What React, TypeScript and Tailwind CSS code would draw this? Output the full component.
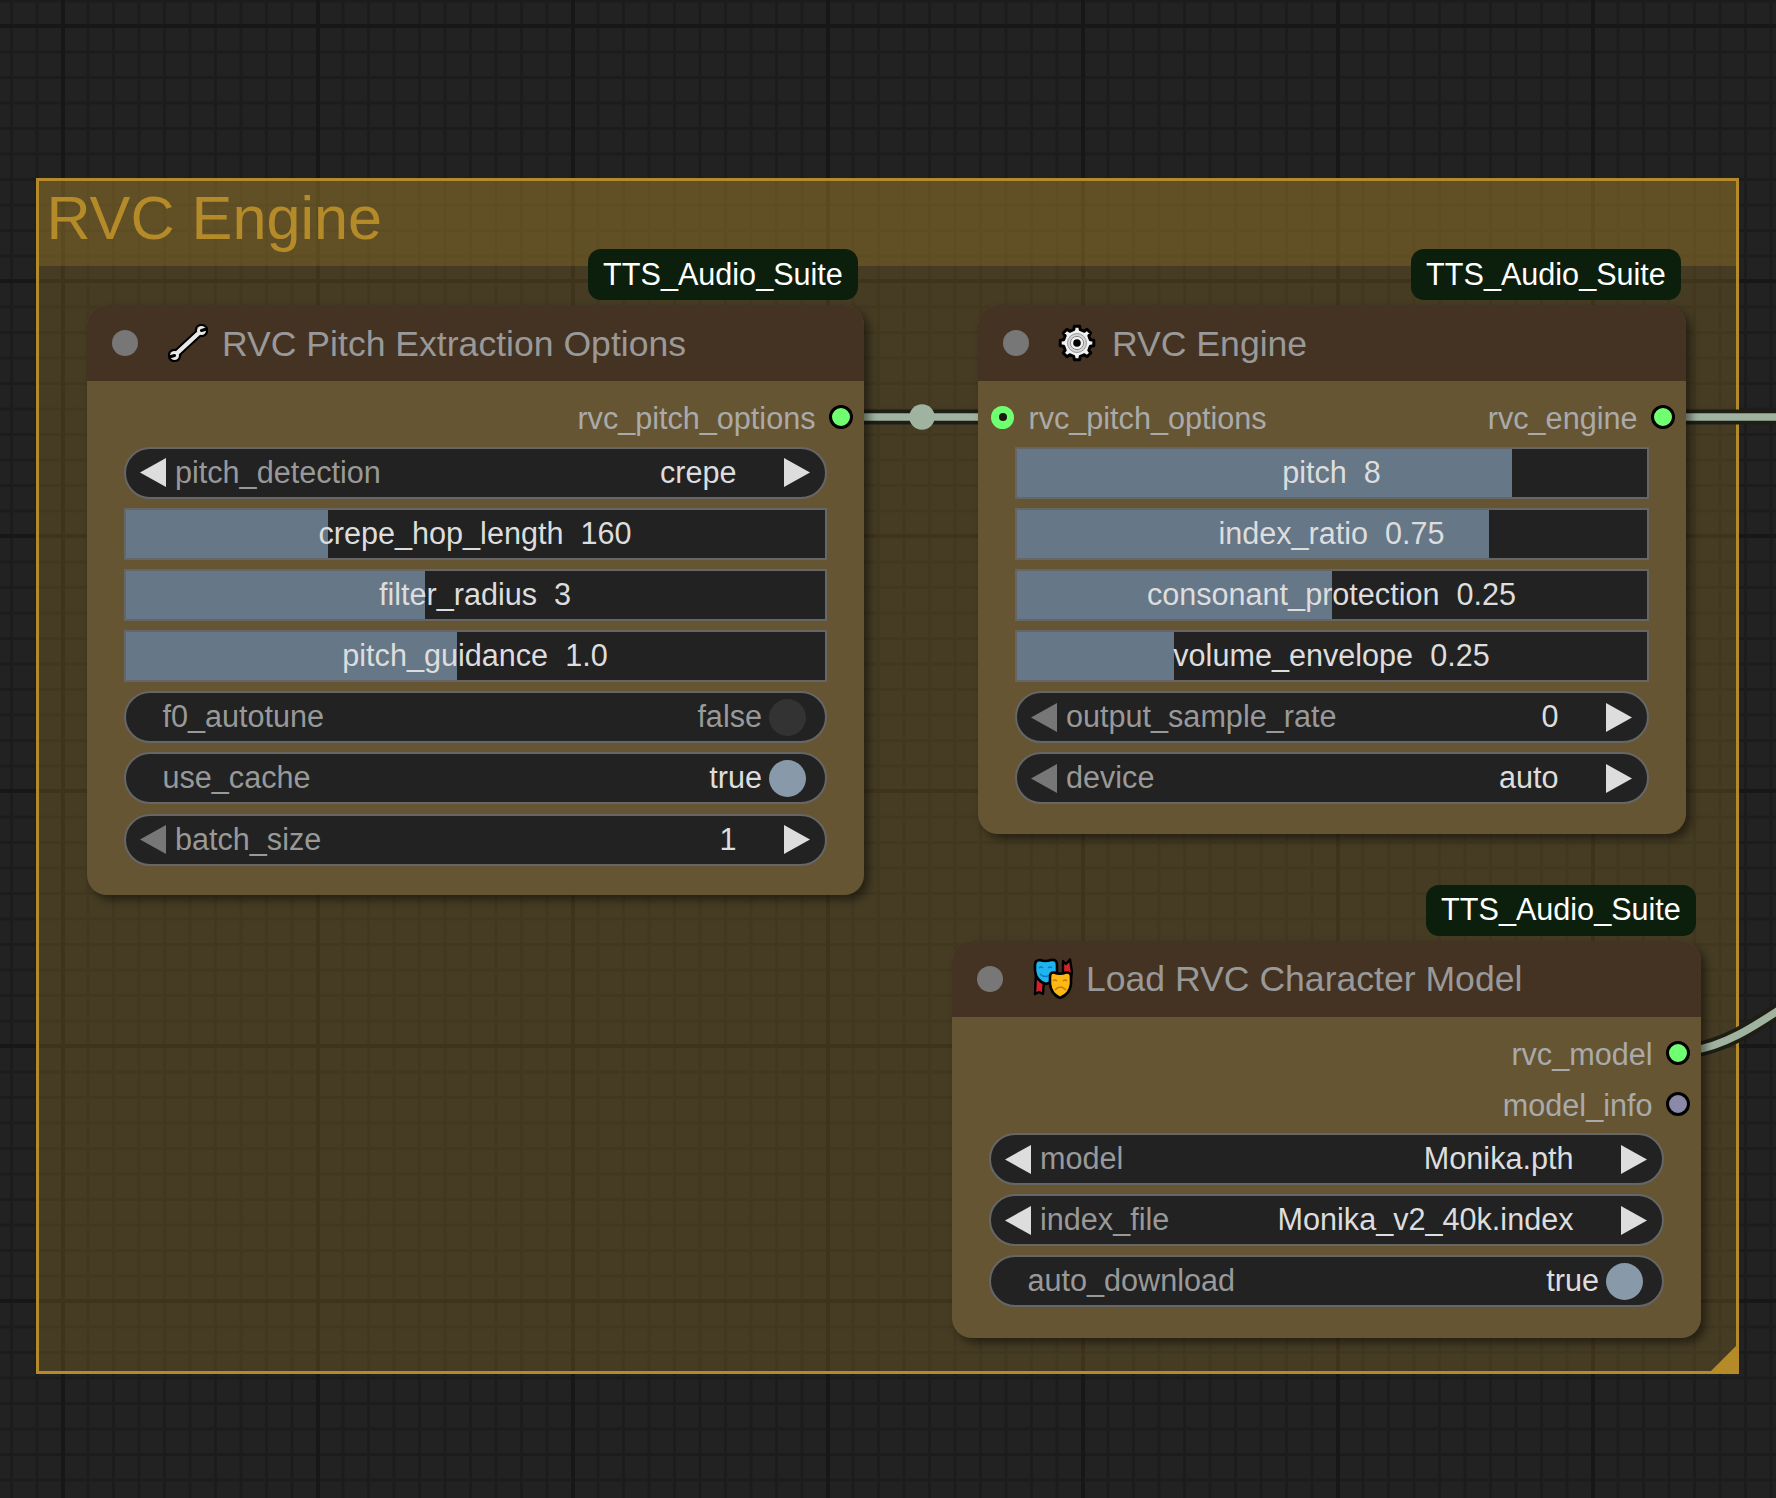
import React from 'react';

const FONT = 'font-["Liberation_Sans",Arial,sans-serif]';

const Arrow = ({ dir, dim }: { dir: 'left' | 'right'; dim?: boolean }) => (
  <svg width="26" height="29" viewBox="0 0 26 29" className="shrink-0">
    <polygon points={dir === 'left' ? '26,0 26,29 0,14.5' : '0,0 0,29 26,14.5'} fill={dim ? '#777777' : '#dddddd'} />
  </svg>
);

const Combo = ({ label, value, dimLeft }: { label: string; value: string; dimLeft?: boolean }) => (
  <div className="flex h-[52px] items-center rounded-full border-[2.5px] border-[#666666] bg-[#222222] pl-[14px] pr-[14.5px] text-[30.6px]">
    <Arrow dir="left" dim={dimLeft} />
    <span className="ml-[9.5px] text-[#999999]">{label}</span>
    <span className="ml-auto mr-[47.5px] text-[#dddddd]">{value}</span>
    <Arrow dir="right" />
  </div>
);

const Slider = ({ label, value, pct }: { label: string; value: string; pct: number }) => (
  <div className="relative flex h-[52px] items-center justify-center border-[2.5px] border-[#666666] bg-[#222222] text-[30.6px] text-[#dddddd]">
    <div className="absolute inset-y-0 left-0 bg-[#667788]" style={{ width: `${pct}%` }} />
    <span className="relative whitespace-pre">{label}  {value}</span>
  </div>
);

const Toggle = ({ label, on }: { label: string; on: boolean }) => (
  <div className="flex h-[52px] items-center rounded-full border-[2.5px] border-[#666666] bg-[#222222] pl-[37px] pr-[18.5px] text-[30.6px]">
    <span className="text-[#999999]">{label}</span>
    <span className={on ? 'ml-auto mr-[7px] text-[#dddddd]' : 'ml-auto mr-[7px] text-[#999999]'}>{on ? 'true' : 'false'}</span>
    <div className={on ? 'h-[37px] w-[37px] rounded-full bg-[#8899aa]' : 'h-[37px] w-[37px] rounded-full bg-[#333333]'} />
  </div>
);

const OutDot = ({ color }: { color: string }) => (
  <div className={`h-[24px] w-[24px] shrink-0 rounded-full border-[3px] border-black ${color}`} />
);

const InDot = () => (
  <div className="flex h-[23px] w-[23px] shrink-0 items-center justify-center rounded-full bg-[#70ff70]">
    <div className="h-[8px] w-[8px] rounded-full bg-[#1a1a10]" />
  </div>
);

const WrenchIcon = () => (
  <svg width="40" height="38" viewBox="0 0 40 38" className="shrink-0">
    <g fill="none" strokeLinecap="round">
      <path d="M7 31 L33 7" stroke="#000" strokeWidth="8.4" />
      <circle cx="6.5" cy="31.5" r="6.8" fill="#000" />
      <circle cx="33.5" cy="6.5" r="6.8" fill="#000" />
      <path d="M7 31 L33 7" stroke="#e8e8e8" strokeWidth="4.4" />
      <circle cx="6.5" cy="31.5" r="4.5" fill="#e8e8e8" />
      <circle cx="33.5" cy="6.5" r="4.5" fill="#e8e8e8" />
      <path d="M1.5 33 L6.5 31.5" stroke="#000" strokeWidth="3" />
      <path d="M38.5 5 L33.5 6.5" stroke="#000" strokeWidth="3" />
    </g>
  </svg>
);

const gearPath = () => {
  const pts: string[] = [];
  const teeth = 8;
  const step = (Math.PI * 2) / teeth;
  for (let i = 0; i < teeth; i++) {
    const a = i * step;
    [[-0.5, 13.6], [-0.3, 13.8], [-0.2, 17], [0.2, 17], [0.3, 13.8]].forEach(([o, r]) => {
      const t = a + o * step;
      pts.push(`${(19 + r * Math.cos(t)).toFixed(2)},${(19 + r * Math.sin(t)).toFixed(2)}`);
    });
  }
  return pts.join(' ');
};

const GearIcon = () => (
  <svg width="38" height="38" viewBox="0 0 38 38" className="shrink-0">
    <polygon points={gearPath()} fill="#f2f2f2" stroke="#000" strokeWidth="3" strokeLinejoin="round" />
    <circle cx="19" cy="19" r="9.5" fill="#d4d4d4" stroke="#9a9a9a" strokeWidth="1" />
    <circle cx="19" cy="19" r="6.6" fill="#f2f2f2" stroke="#8a8a8a" strokeWidth="1" />
    <circle cx="19" cy="19" r="3.8" fill="#000" />
  </svg>
);

const MasksIcon = () => (
  <svg width="40" height="41" viewBox="0 0 40 41" className="shrink-0">
    <path d="M3 14 L2 36 L6 34 L10 36 L11 22 Z" fill="#d6202c" stroke="#000" strokeWidth="2.4" strokeLinejoin="round" />
    <path d="M30 3 L33 6 L37 1.5 L39 14 L37 26 L30 20 Z" fill="#d6202c" stroke="#000" strokeWidth="2.4" strokeLinejoin="round" />
    <path d="M2 7 Q2 2 7 2 Q12 4 18 2 Q24 1 24 7 L24 13 Q24 23 13 26 Q3 23 2 13 Z" fill="#1eb4ee" stroke="#000" strokeWidth="2.6" />
    <path d="M6 10 Q8 8 10 10 M15 10 Q17 8 19 10 M7 16 Q12 21 18 16" fill="none" stroke="#1577c0" strokeWidth="1.4" />
    <path d="M17 19 Q17 14 21 14.5 Q27 17 33 14.5 Q38 14 38 19 L38 26 Q37 36 27 40 Q18 36 17 26 Z" fill="#fdb813" stroke="#000" strokeWidth="2.6" />
    <path d="M20 23 Q22 21 24 23 M30 23 Q32 21 34 23 M22 32 Q27 26 33 32" fill="none" stroke="#c27c0e" strokeWidth="1.4" />
  </svg>
);

const Node = ({ box, badgeRight, title, icon, titleGap, children }: {
  box: string;
  badgeRight: string;
  title: string;
  icon: React.ReactNode;
  titleGap: string;
  children: React.ReactNode;
}) => (
  <div className={`absolute flex flex-col rounded-[20px] bg-[#665533] shadow-[5px_5px_8px_rgba(0,0,0,0.45)] ${box}`}>
    <div className={`absolute top-[-56px] flex h-[51px] w-[270px] items-center justify-center rounded-[13px] bg-[#0c1f0c] text-[30.6px] text-white ${badgeRight}`}>
      TTS_Audio_Suite
    </div>
    <div className="flex h-[76px] shrink-0 items-center rounded-t-[20px] bg-[#443322] pl-[25px]">
      <div className="h-[26px] w-[26px] shrink-0 rounded-full bg-[#777777]" />
      <div className={`flex items-center ${titleGap}`}>
        {icon}
        <span className="mt-[3px] text-[35.6px] text-[#999999]">{title}</span>
      </div>
    </div>
    <div className="flex flex-col pt-[10.5px]">{children}</div>
  </div>
);

const Widgets = ({ children }: { children: React.ReactNode }) => (
  <div className="mt-[4px] flex flex-col gap-[9.2px] pl-[36.5px] pr-[37.5px]">{children}</div>
);

const OutRow = ({ label, dot }: { label: string; dot: string }) => (
  <div className="flex h-[51px] items-center justify-end gap-[13px] pr-[11.5px] text-[30.6px] text-[#aaaaaa]">
    <span className="mt-[4px]">{label}</span>
    <OutDot color={dot} />
  </div>
);

export default function App() {
  return (
    <div className={`relative h-[1498px] w-[1776px] overflow-hidden bg-[#222222] ${FONT} bg-[image:linear-gradient(to_right,#171717_4px,transparent_4px),linear-gradient(to_bottom,#171717_4px,transparent_4px),linear-gradient(to_right,#1c1c1c_3px,transparent_3px),linear-gradient(to_bottom,#1c1c1c_3px,transparent_3px)] bg-[size:255px_255px,255px_255px,25.5px_25.5px,25.5px_25.5px] bg-[position:61px_24px,61px_24px,10px_25px,10px_25px]`}>
      {/* group */}
      <div className="absolute left-[36px] top-[178px] h-[1196px] w-[1703px] border-[3px] border-[#b58b2a] bg-[#b58b2a]/25">
        <div className="flex h-[85px] items-center bg-[#b58b2a]/25 pb-[9px] pl-[7.5px] text-[61.2px] leading-none text-[#b58b2a]">RVC Engine</div>
        <svg width="25" height="25" viewBox="0 0 25 25" className="absolute bottom-0 right-0">
          <polygon points="25,0 25,25 0,25" fill="#b58b2a" />
        </svg>
      </div>

      {/* links */}
      <svg className="absolute inset-0" width="1776" height="1498" viewBox="0 0 1776 1498" fill="none">
        <path d="M850 417 L990 417" stroke="#1e1e14" strokeWidth="15" />
        <path d="M1670 417 L1780 417" stroke="#1e1e14" strokeWidth="15" />
        <path d="M1690 1051 C1725 1046 1755 1026 1782 1008" stroke="#1e1e14" strokeWidth="15" />
        <path d="M850 417 L990 417" stroke="#9fb3a0" strokeWidth="7.6" />
        <path d="M1670 417 L1780 417" stroke="#9fb3a0" strokeWidth="7.6" />
        <path d="M1690 1051 C1725 1046 1755 1026 1782 1008" stroke="#9fb3a0" strokeWidth="7.6" />
        <circle cx="922" cy="417" r="12.7" fill="#9fb3a0" />
      </svg>

      <Node box="left-[87px] top-[305px] h-[590px] w-[777px]" badgeRight="right-[6px]" title="RVC Pitch Extraction Options" icon={<WrenchIcon />} titleGap="ml-[30px] gap-[14px]">
        <OutRow label="rvc_pitch_options" dot="bg-[#70ff70]" />
        <Widgets>
          <Combo label="pitch_detection" value="crepe" />
          <Slider label="crepe_hop_length" value="160" pct={29} />
          <Slider label="filter_radius" value="3" pct={42.9} />
          <Slider label="pitch_guidance" value="1.0" pct={47.4} />
          <Toggle label="f0_autotune" on={false} />
          <Toggle label="use_cache" on />
          <Combo label="batch_size" value="1" dimLeft />
        </Widgets>
      </Node>

      <Node box="left-[978px] top-[305px] h-[529px] w-[708px]" badgeRight="right-[5px]" title="RVC Engine" icon={<GearIcon />} titleGap="ml-[29px] gap-[16px]">
        <div className="flex h-[51px] items-center pl-[13px] pr-[11.5px] text-[30.6px] text-[#aaaaaa]">
          <InDot />
          <span className="ml-[14.5px] mt-[4px]">rvc_pitch_options</span>
          <span className="ml-auto mr-[13px] mt-[4px]">rvc_engine</span>
          <OutDot color="bg-[#70ff70]" />
        </div>
        <Widgets>
          <Slider label="pitch" value="8" pct={78.6} />
          <Slider label="index_ratio" value="0.75" pct={75} />
          <Slider label="consonant_protection" value="0.25" pct={50} />
          <Slider label="volume_envelope" value="0.25" pct={25} />
          <Combo label="output_sample_rate" value="0" dimLeft />
          <Combo label="device" value="auto" dimLeft />
        </Widgets>
      </Node>

      <Node box="left-[952px] top-[940.5px] h-[397px] w-[749px]" badgeRight="right-[5px]" title="Load RVC Character Model" icon={<MasksIcon />} titleGap="ml-[30px] gap-[13px]">
        <OutRow label="rvc_model" dot="bg-[#70ff70]" />
        <OutRow label="model_info" dot="bg-[#8a8aa8]" />
        <Widgets>
          <Combo label="model" value="Monika.pth" />
          <Combo label="index_file" value="Monika_v2_40k.index" />
          <Toggle label="auto_download" on />
        </Widgets>
      </Node>
    </div>
  );
}
